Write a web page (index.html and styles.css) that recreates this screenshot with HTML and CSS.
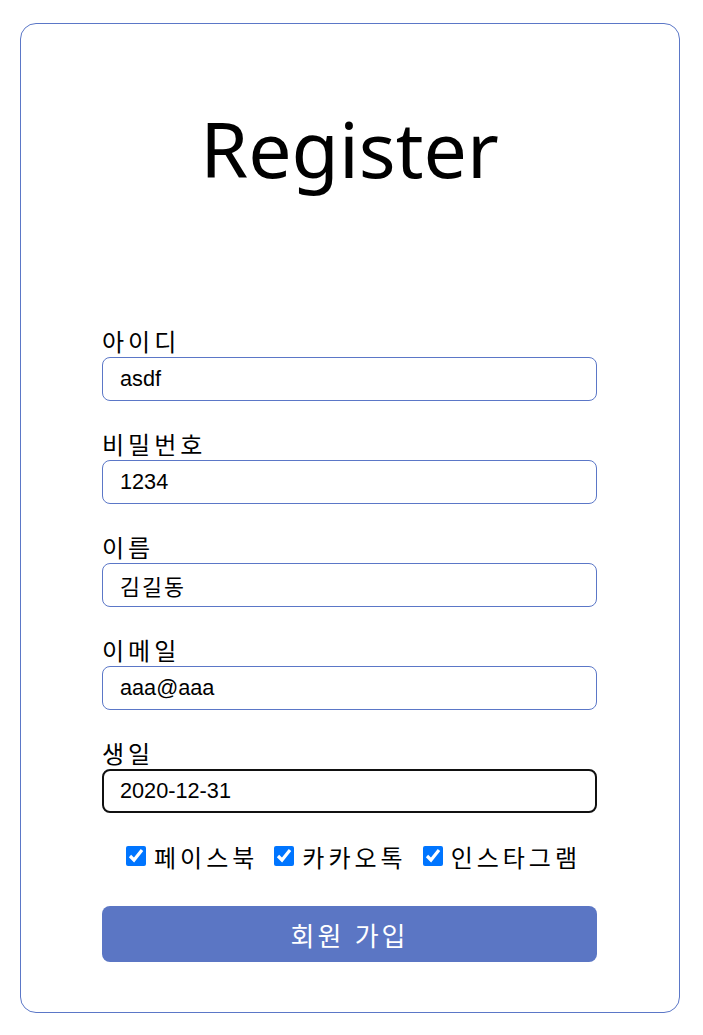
FILE: index.html
```html
<!DOCTYPE html>
<html lang="ko">
<head>
<meta charset="utf-8">
<title>Register</title>
<link rel="stylesheet" href="styles.css">
</head>
<body>
<div class="card">
  <h1 class="title">Register</h1>
  <form class="form">
    <div class="field">
      <label class="label">아이디</label>
      <input class="input" type="text" value="asdf">
    </div>
    <div class="field">
      <label class="label">비밀번호</label>
      <input class="input" type="text" value="1234">
    </div>
    <div class="field">
      <label class="label">이름</label>
      <input class="input ko" type="text" value="김길동">
    </div>
    <div class="field">
      <label class="label">이메일</label>
      <input class="input" type="text" value="aaa@aaa">
    </div>
    <div class="field">
      <label class="label">생일</label>
      <input class="input focused" type="text" value="2020-12-31">
    </div>
    <div class="checks">
      <label class="check"><input type="checkbox" checked><span>페이스북</span></label>
      <label class="check"><input type="checkbox" checked><span>카카오톡</span></label>
      <label class="check"><input type="checkbox" checked><span>인스타그램</span></label>
    </div>
    <button class="submit" type="button">회원 가입</button>
  </form>
</div>
</body>
</html>
```
FILE: styles.css
```css
html, body {
  margin: 0;
  padding: 0;
  background: #fff;
}
body {
  padding: 23px 0 0 20px;
  font-family: "Noto Sans", "Noto Sans CJK KR", sans-serif;
  color: #000;
}
.card {
  box-sizing: border-box;
  width: 660px;
  height: 990px;
  border: 1px solid #5b77c7;
  border-radius: 16px;
  padding: 0 82px 0 81px;
}
.title {
  margin: 0;
  padding-top: 72px;
  height: 180px;
  box-sizing: content-box;
  text-align: center;
  font-family: "Noto Sans", "Open Sans", sans-serif;
  font-weight: 400;
  font-size: 77px;
  line-height: 106px;
}
.form {
  display: flex;
  flex-direction: column;
  padding-top: 49px;
}
.field {
  display: flex;
  flex-direction: column;
  margin-bottom: 27px;
}
.label {
  font-family: "Noto Sans CJK KR", sans-serif;
  font-size: 24px;
  line-height: 32px;
  height: 32px;
  letter-spacing: 4px;
}
.input {
  box-sizing: border-box;
  width: 495px;
  height: 44px;
  border: 1px solid #5b77c7;
  border-radius: 8px;
  padding: 0 17px;
  font-family: "Liberation Sans", "Noto Sans CJK KR", sans-serif;
  font-size: 21.7px;
  color: #000;
  outline: none;
}
.input.ko {
  letter-spacing: 2px;
}
.input.focused {
  border: 2px solid #111;
  padding: 0 16px;
}
.checks {
  display: flex;
  justify-content: center;
  gap: 16px;
  height: 32px;
  align-items: center;
  padding-left: 8px;
}
.check {
  display: flex;
  align-items: center;
  gap: 8px;
  font-family: "Noto Sans CJK KR", sans-serif;
  font-size: 24px;
  letter-spacing: 4px;
}
.check input {
  width: 20px;
  height: 20px;
  margin: 0;
  accent-color: #0075ff;
}
.submit {
  margin-top: 34px;
  width: 495px;
  height: 56px;
  border: none;
  border-radius: 8px;
  background: #5b76c4;
  color: #fff;
  font-family: "Noto Sans CJK KR", sans-serif;
  font-size: 26px;
  letter-spacing: 3px;
}
```
